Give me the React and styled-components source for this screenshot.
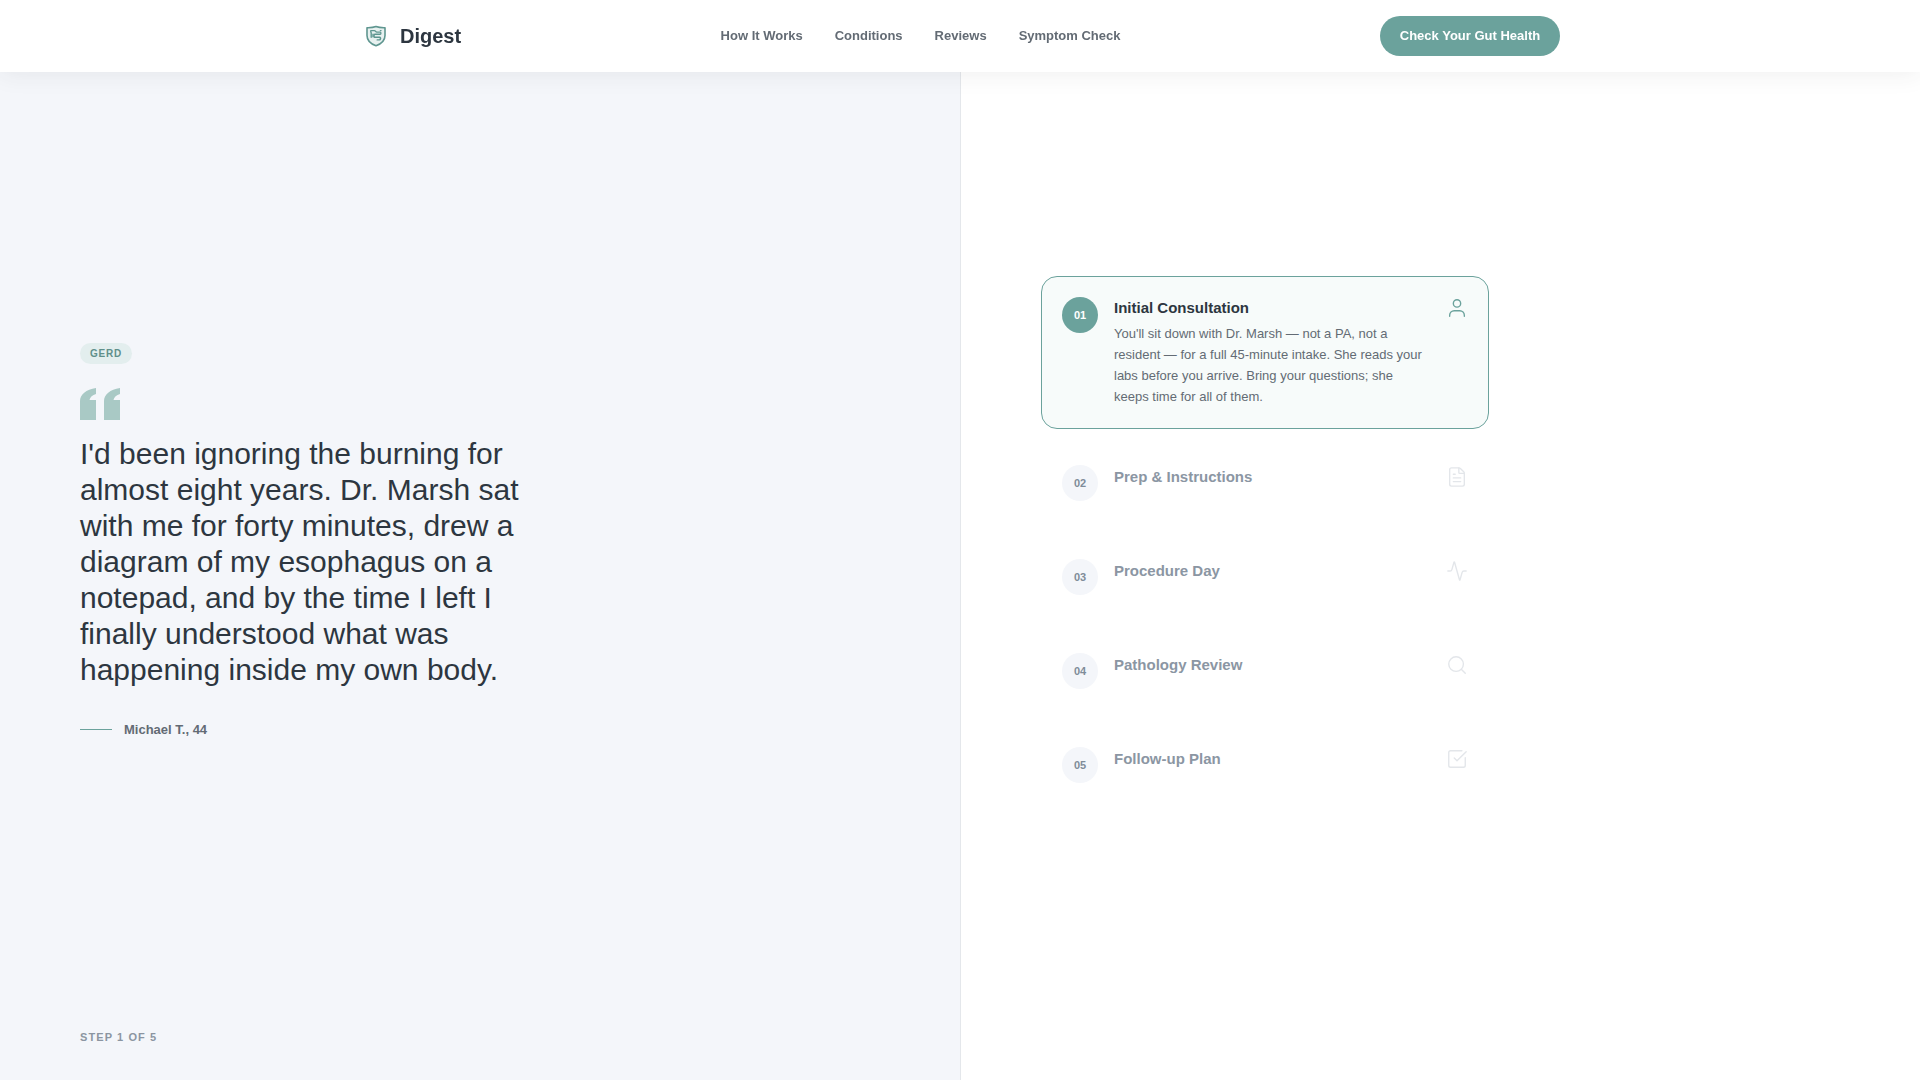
import React from "react";
import styled, { createGlobalStyle } from "styled-components";
import { FileText, Activity, Search, SquareCheckBig } from "lucide-react";

const Global = createGlobalStyle`
  * { box-sizing: border-box; }
  html, body { margin: 0; padding: 0; background: #fff; }
  body { font-family: "Liberation Sans", Arial, sans-serif; color: #2d3640; }
`;

const Header = styled.header`
  position: fixed;
  top: 0; left: 0; right: 0;
  height: 72px;
  background: #fff;
  box-shadow: 0 2px 24px rgba(45, 52, 54, 0.08);
  z-index: 10;
`;
const HeaderInner = styled.div`
  width: 1200px;
  height: 100%;
  margin: 0 auto;
  display: flex;
  align-items: center;
  justify-content: space-between;
`;
const Logo = styled.div`
  display: flex;
  align-items: center;
  gap: 12px;
  padding-left: 4px;
  font-size: 20px;
  font-weight: 700;
  color: #2d3640;
`;
const Nav = styled.nav`
  display: flex;
  gap: 32px;
`;
const NavLink = styled.a`
  font-size: 13px;
  line-height: 14px;
  font-weight: 700;
  color: #636b74;
`;
const Cta = styled.button`
  width: 180px;
  height: 40px;
  padding: 0 0 2px;
  border: 0;
  border-radius: 20px;
  background: #6ba29c;
  color: #fff;
  font: 700 13px "Liberation Sans", Arial, sans-serif;
`;
const Main = styled.main`
  display: flex;
  height: 1080px;
`;
const Left = styled.section`
  position: relative;
  width: 961px;
  flex: none;
  background: #f4f6fa;
  border-right: 1px solid #e4e7eb;
  padding: 0 80px;
  display: flex;
  flex-direction: column;
  justify-content: center;
  align-items: flex-start;
`;
const Tag = styled.span`
  height: 21px;
  line-height: 21px;
  padding: 0 10px;
  border-radius: 11px;
  background: #e3eeee;
  color: #5f8f8a;
  font-size: 10px;
  font-weight: 700;
  letter-spacing: 0.8px;
  margin-bottom: 24px;
`;
const QuoteMark = styled.svg`
  display: block;
  width: 40px;
  height: 32px;
  margin-bottom: 16px;
  fill: #a9c9c5;
`;
const QuoteText = styled.blockquote`
  margin: 0 0 34px;
  width: 448px;
  font-size: 30px;
  line-height: 36px;
  color: #2d3640;
`;
const Author = styled.div`
  display: flex;
  align-items: center;
  gap: 12px;
  font-size: 13px;
  font-weight: 700;
  color: #636b74;
  &::before {
    content: "";
    width: 32px;
    height: 1px;
    background: #6ba29c;
  }
`;
const StepCount = styled.div`
  position: absolute;
  left: 80px;
  bottom: 37px;
  font-size: 11px;
  font-weight: 700;
  letter-spacing: 1.1px;
  color: #8b95a1;
`;
const Right = styled.section`
  flex: 1;
  padding: 0 80px;
  display: flex;
  flex-direction: column;
  justify-content: center;
  gap: 16px;
`;
const Step = styled.article`
  width: 448px;
  display: flex;
  align-items: flex-start;
  gap: 16px;
  padding: ${p => (p.$active ? "20px 20px 21px" : "20px")};
  margin-bottom: ${p => (p.$active ? "-1px" : "0")};
  border: 1px solid ${p => (p.$active ? "#6ba29c" : "transparent")};
  border-radius: 16px;
  background: ${p => (p.$active ? "#f7fbfa" : "transparent")};
`;
const Num = styled.div`
  flex: none;
  width: 36px;
  height: 36px;
  border-radius: 50%;
  display: flex;
  align-items: center;
  justify-content: center;
  font-size: 11px;
  font-weight: 700;
  background: ${p => (p.$active ? "#6ba29c" : "#f4f6fa")};
  color: ${p => (p.$active ? "#fff" : "#7f8c99")};
`;
const Body = styled.div`
  flex: 1;
  min-width: 0;
`;
const Title = styled.h3`
  margin: ${p => (p.$active ? "0" : "1px 0 0")};
  font-size: 15px;
  line-height: 22px;
  font-weight: 700;
  color: ${p => (p.$active ? "#2d3640" : "#8b96a3")};
`;
const Desc = styled.p`
  margin: 4px 0 0;
  width: 312px;
  font-size: 13px;
  line-height: 21px;
  color: #636b74;
`;
const IconSlot = styled.div`
  flex: none;
  width: 22px;
  height: 22px;
  margin-top: ${p => (p.$active ? "0" : "1px")};
  color: ${p => (p.$active ? "#6ba29c" : "#e3e6ea")};
  svg { display: block; }
`;

const PersonIcon = ({ size, strokeWidth }) => (
  <svg width={size} height={size} viewBox="0 0 24 24" fill="none" stroke="currentColor" strokeWidth={strokeWidth} strokeLinecap="round" strokeLinejoin="round">
    <circle cx="12" cy="7" r="4" />
    <path d="M4 21v-1a5 5 0 0 1 5-5h6a5 5 0 0 1 5 5v1" />
  </svg>
);

const steps = [
  { n: "01", title: "Initial Consultation", Icon: PersonIcon, active: true,
    desc: "You'll sit down with Dr. Marsh — not a PA, not a resident — for a full 45-minute intake. She reads your labs before you arrive. Bring your questions; she keeps time for all of them." },
  { n: "02", title: "Prep & Instructions", Icon: FileText },
  { n: "03", title: "Procedure Day", Icon: Activity },
  { n: "04", title: "Pathology Review", Icon: Search },
  { n: "05", title: "Follow-up Plan", Icon: SquareCheckBig },
];

const ShieldLogo = () => (
  <svg width="24" height="24" viewBox="0 0 24 24" fill="none" stroke="#5f9690" strokeWidth="1.6" strokeLinecap="round" strokeLinejoin="round">
    <path d="M12 2.6c2.6 1 5.6 1.3 9 1.2v7.6c0 4.8-3.6 8.3-9 10.4-5.4-2.1-9-5.6-9-10.4V3.8c3.4.1 6.4-.2 9-1.2z" fill="#e8f1f0" />
    <path d="M6.8 8V6.6h3.6c1.2 0 1.2 1.5 2.4 1.5h3.4c.9 0 .9 2.2 0 2.2h-5.4c-1 0-1.2 3 0 3h5c1.2 0 1 2.6-.4 2.6h-2.2" strokeWidth="1.4" />
    <path d="M7.2 8.8v4.4M17 6.6h-.6M9 10.2v2.600" strokeWidth="1.4" />
  </svg>
);

export default function App() {
  return (
    <>
      <Global />
      <Header>
        <HeaderInner>
          <Logo><ShieldLogo />Digest</Logo>
          <Nav>
            <NavLink>How It Works</NavLink>
            <NavLink>Conditions</NavLink>
            <NavLink>Reviews</NavLink>
            <NavLink>Symptom Check</NavLink>
          </Nav>
          <Cta>Check Your Gut Health</Cta>
        </HeaderInner>
      </Header>
      <Main>
        <Left>
          <Tag>GERD</Tag>
          <QuoteMark viewBox="0 0 40 32">
            <path d="M0 32V13C0 6.500 6 1.500 16 0v6C12.500 7 10 9 9.500 12H16V32z" />
            <path d="M24 32V13C24 6.500 30 1.500 40 0v6C36.500 7 34 9 33.500 12H40V32z" />
          </QuoteMark>
          <QuoteText>I'd been ignoring the burning for almost eight years. Dr. Marsh sat with me for forty minutes, drew a diagram of my esophagus on a notepad, and by the time I left I finally understood what was happening inside my own body.</QuoteText>
          <Author>Michael T., 44</Author>
          <StepCount>STEP 1 OF 5</StepCount>
        </Left>
        <Right>
          {steps.map(({ n, title, desc, Icon, active }) => (
            <Step key={n} $active={active}>
              <Num $active={active}>{n}</Num>
              <Body>
                <Title $active={active}>{title}</Title>
                {desc && <Desc>{desc}</Desc>}
              </Body>
              <IconSlot $active={active}><Icon size={22} strokeWidth={1.5} /></IconSlot>
            </Step>
          ))}
        </Right>
      </Main>
    </>
  );
}
